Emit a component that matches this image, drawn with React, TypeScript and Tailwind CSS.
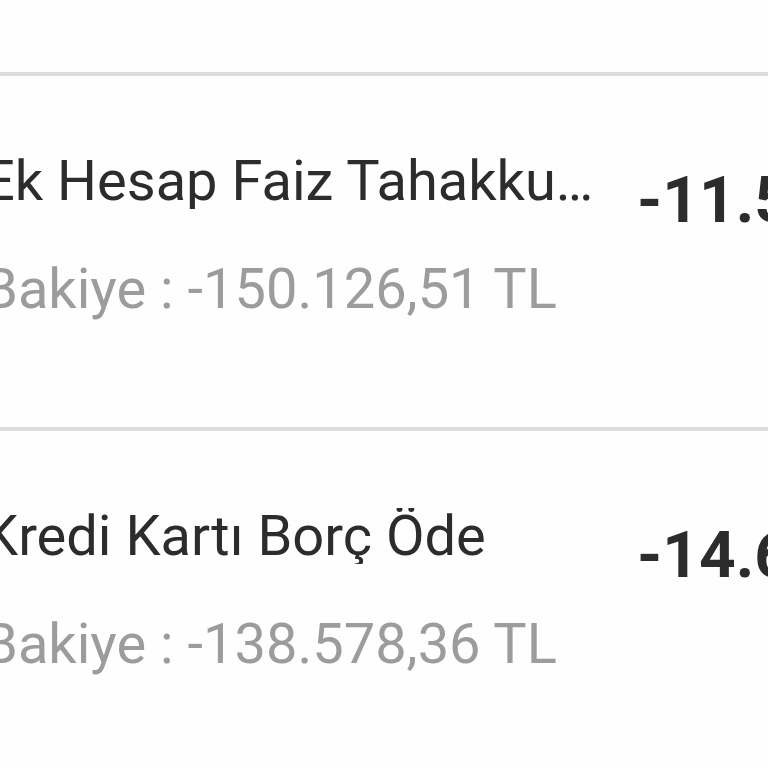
export default function App() {
  const rows = [
    { title: "Ek Hesap Faiz Tahakkuku", balance: "-150.126,51 TL", amount: "-11.548,15 TL" },
    { title: "Kredi Kartı Borç Öde", balance: "-138.578,36 TL", amount: "-14.650,00 TL" },
  ]

  return (
    <div className="w-[768px] h-[768px] overflow-hidden bg-[#fefefe] font-['Roboto',sans-serif]">
      <div className="h-[72px]" />
      {rows.map((row) => (
        <div key={row.balance}>
          <div className="h-[4px] bg-[#dcdcdc]" />
          <div className="flex h-[351px] -ml-[17px]">
            <div className="w-[614px] shrink-0 pt-[77px]">
              <div className="truncate text-[56px] leading-none text-[#2c2c2c]">{row.title}</div>
              <div className="mt-[52px] whitespace-nowrap text-[56px] leading-none text-[#9c9c9c]">
                Bakiye : {row.balance}
              </div>
            </div>
            <div className="ml-[40px] pt-[93px] whitespace-nowrap text-[64px] leading-none font-bold text-[#2c2c2c]">
              {row.amount}
            </div>
          </div>
        </div>
      ))}
    </div>
  )
}
